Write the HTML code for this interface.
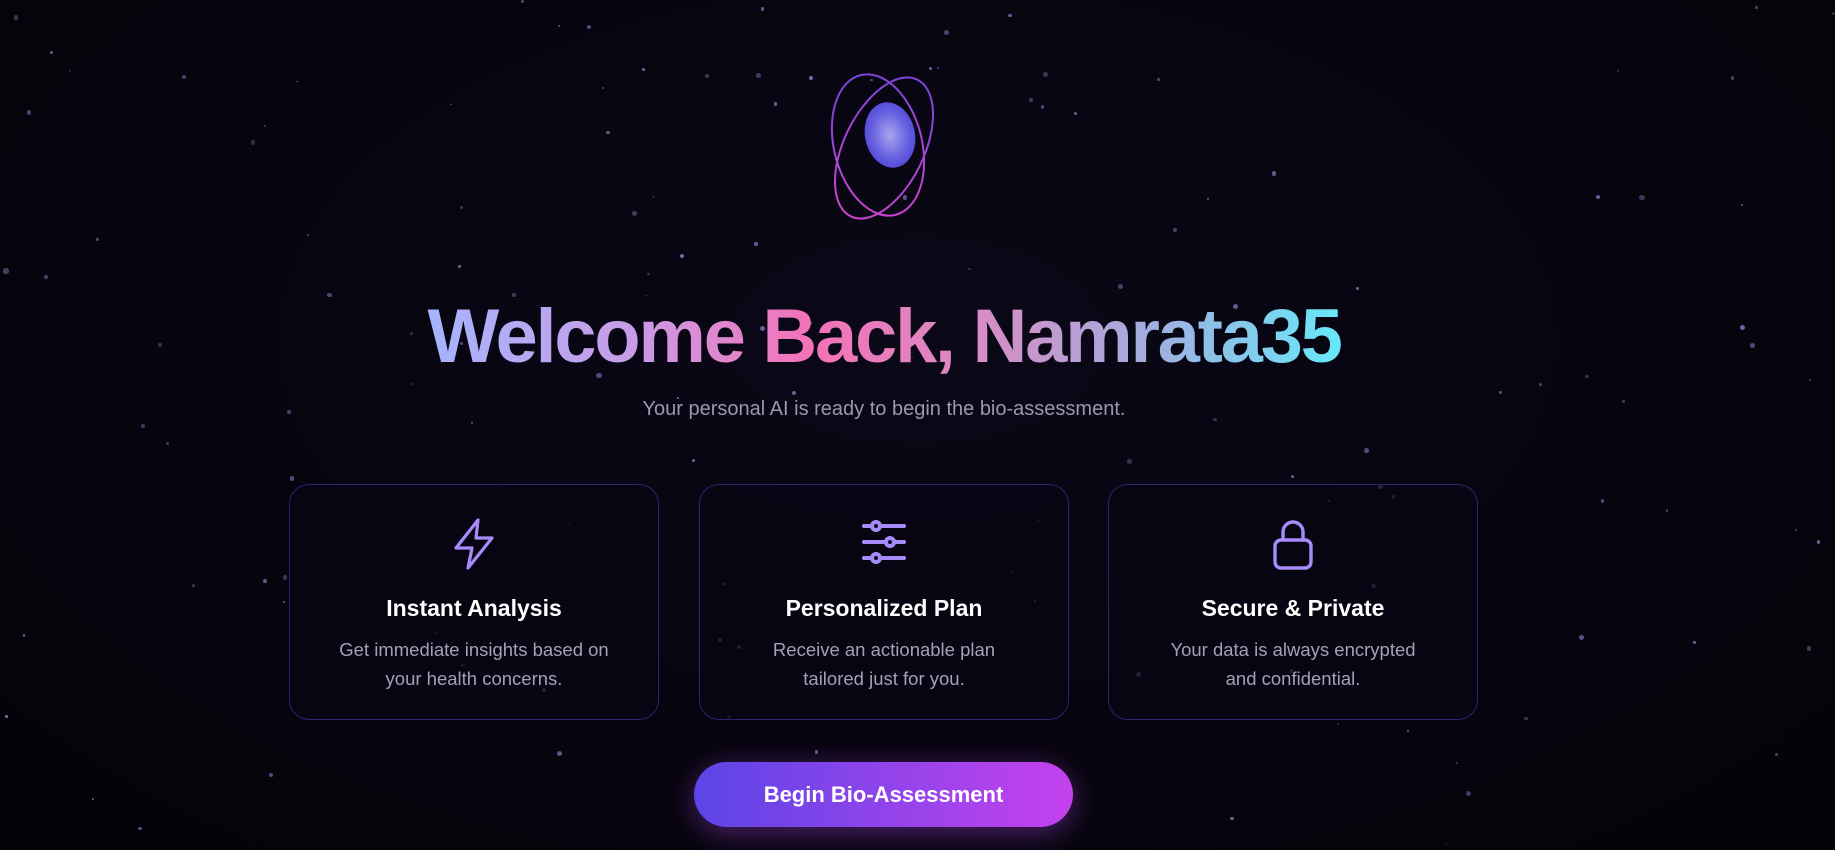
<!DOCTYPE html>
<html><head><meta charset="utf-8"><style>
html,body{margin:0;padding:0;width:1835px;height:850px;overflow:hidden;background:radial-gradient(ellipse at 50% 40%,#0b0818 0%,#06040d 60%,#040309 100%);font-family:"Liberation Sans",sans-serif;}
.star{position:absolute;border-radius:50%;background:#6f6aa8;}
.hw{position:absolute;left:0;width:1768px;top:292px;text-align:center;}
h1{display:inline-block;margin:0;font-size:76px;font-weight:bold;letter-spacing:-2.3px;line-height:90px;background:linear-gradient(90deg,#a5b4fc 0%,#c79de8 22%,#f472b6 42%,#d88bc4 60%,#9fb0e0 80%,#67e8f9 100%);-webkit-background-clip:text;background-clip:text;color:transparent;}
.sub{position:absolute;left:0;width:1768px;top:398px;text-align:center;color:#9a98ad;font-size:20px;}
.card{position:absolute;top:484px;width:368px;height:234px;border:1px solid #2a2470;border-radius:20px;background:rgba(8,6,20,0.7);text-align:center;}
.card svg{position:absolute;left:160px;top:33px;}
.card .t{position:absolute;top:110px;width:100%;color:#fff;font-weight:bold;font-size:23px;}
.card .d{position:absolute;top:150px;width:100%;color:#a3a1b5;font-size:18.5px;line-height:29px;}
.btn{position:absolute;left:694px;top:762px;width:379px;height:65px;border-radius:33px;background:linear-gradient(90deg,#5b45e6,#c542ee);color:#fff;font-weight:bold;font-size:22px;line-height:65px;text-align:center;box-shadow:0 6px 30px rgba(170,70,230,0.45);}
</style></head><body>
<div id="stars"></div>
<svg style="position:absolute;left:820px;top:60px" width="130" height="170" viewBox="0 0 130 170">
<defs><radialGradient id="g" cx="0.5" cy="0.5" r="0.6"><stop offset="0" stop-color="#a8a6ee"/><stop offset="0.6" stop-color="#6660e0"/><stop offset="1" stop-color="#4a3fd0"/></radialGradient>
<linearGradient id="o" x1="0" y1="0" x2="0" y2="1"><stop offset="0" stop-color="#7a44d8"/><stop offset="1" stop-color="#cc44cc"/></linearGradient></defs>
<ellipse cx="70" cy="75" rx="25" ry="33" transform="rotate(-12 70 75)" fill="url(#g)"/>
<ellipse cx="58" cy="85" rx="44" ry="72" transform="rotate(-14 58 85)" fill="none" stroke="url(#o)" stroke-width="2"/>
<ellipse cx="64" cy="88" rx="40" ry="76" transform="rotate(26 64 88)" fill="none" stroke="url(#o)" stroke-width="2"/>
</svg>
<div class="hw"><h1>Welcome Back, Namrata35</h1></div>
<div class="sub">Your personal AI is ready to begin the bio-assessment.</div>
<div class="card" style="left:289px">
<svg width="48" height="52" viewBox="0 0 24 26" fill="none" stroke="#a78bfa" stroke-width="1.6" stroke-linejoin="round"><path d="M14 1 L3 15 H11 L9 25 L21 10 H13 Z"/></svg>
<div class="t">Instant Analysis</div><div class="d">Get immediate insights based on<br>your health concerns.</div></div>
<div class="card" style="left:699px">
<svg width="48" height="48" viewBox="0 0 24 24" fill="none" stroke="#a78bfa" stroke-width="2" stroke-linecap="round"><path d="M2 4H22M2 12H22M2 20H22"/><circle cx="8" cy="4" r="2" fill="#0a0818"/><circle cx="15" cy="12" r="2" fill="#0a0818"/><circle cx="8" cy="20" r="2" fill="#0a0818"/></svg>
<div class="t">Personalized Plan</div><div class="d">Receive an actionable plan<br>tailored just for you.</div></div>
<div class="card" style="left:1108px">
<svg width="48" height="52" viewBox="0 0 24 26" fill="none" stroke="#a78bfa" stroke-width="1.7"><rect x="3" y="11" width="18" height="14" rx="3"/><path d="M7 11V7a5 5 0 0 1 10 0v4"/></svg>
<div class="t">Secure &amp; Private</div><div class="d">Your data is always encrypted<br>and confidential.</div></div>
<div class="btn">Begin Bio-Assessment</div>
<script>
var s=document.getElementById('stars'),seed=7;function r(){seed=(seed*9301+49297)%233280;return seed/233280;}
for(var i=0;i<140;i++){var d=document.createElement('div');d.className='star';var z=1.5+r()*4;d.style.cssText='left:'+(r()*1835)+'px;top:'+(r()*850)+'px;width:'+z+'px;height:'+z+'px;opacity:'+(0.4+r()*0.6);s.appendChild(d);}
</script>
</body></html>
